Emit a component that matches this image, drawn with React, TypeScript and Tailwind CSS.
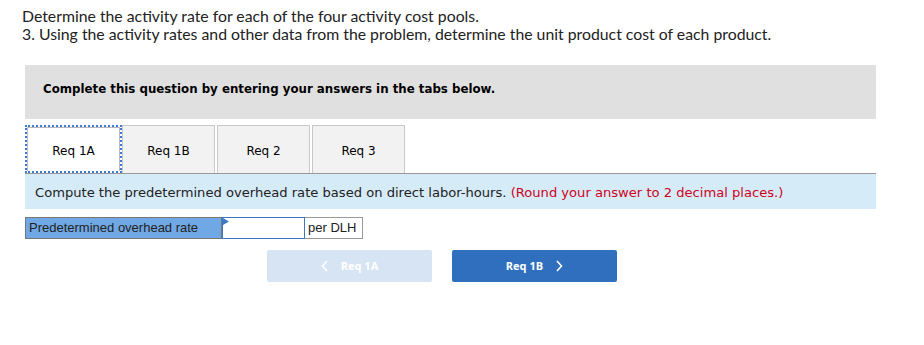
import React from 'react';

const verdana = "font-['Verdana','DejaVu_Sans',sans-serif]";

const tabs = ['Req 1A', 'Req 1B', 'Req 2', 'Req 3'];

const App: React.FC = () => {
  return (
    <div className="w-[924px] h-[345px] bg-white overflow-hidden">
      {/* Question text */}
      <div className="pl-[22px] pt-[7px] text-[15.8px] leading-[18px] text-[#222] font-['Lato','Open_Sans',sans-serif]">
        <p>Determine the activity rate for each of the four activity cost pools.</p>
        <p>3. Using the activity rates and other data from the problem, determine the unit product cost of each product.</p>
      </div>

      <div className="ml-[25px] w-[851px] mt-[22px]">
        {/* Instruction box */}
        <div className={`h-[54px] bg-[#e0e0e0] pl-[18px] pt-[11px] ${verdana}`}>
          <span className="text-[11.8px] font-bold text-black">Complete this question by entering your answers in the tabs below.</span>
        </div>

        {/* Tabs */}
        <div className={`mt-[6px] flex h-[48px] ${verdana}`}>
          {tabs.map((t, i) =>
            i === 0 ? (
              <div key={t} className="w-[97px] border-2 border-dotted border-[#3a7bd5] p-0">
                <div className="h-full bg-white border border-[#bbb] border-b-0 flex items-center justify-center pt-[3px] text-[12px] text-black">
                  {t}
                </div>
              </div>
            ) : (
              <div
                key={t}
                className={`w-[93px] ${i > 1 ? 'ml-[2px]' : ''} bg-[#f2f2f2] border border-[#c8c8c8] border-b-0 flex items-center justify-center pt-[3px] text-[12px] text-black`}
              >
                {t}
              </div>
            )
          )}
        </div>

        {/* Instruction panel */}
        <div className={`h-[36px] bg-[#d6ebf8] border-t border-[#999] flex items-center pl-[10px] pt-[3px] text-[13.1px] text-[#222] ${verdana}`}>
          <span>
            Compute the predetermined overhead rate based on direct labor-hours.{' '}
            <span className="text-[#d0021b]">(Round your answer to 2 decimal places.)</span>
          </span>
        </div>

        {/* Answer row */}
        <div className="mt-[8px] flex h-[22px] font-['Liberation_Sans',Arial,sans-serif] text-[13px]">
          <div className="w-[197px] bg-[#6fa8e4] border border-[#777] flex items-center pl-[3px] text-[#222]">
            Predetermined overhead rate
          </div>
          <div className="relative w-[83px] border border-[#3c78c8] bg-white">
            <svg className="absolute left-0 top-0" width="6" height="7" viewBox="0 0 6 7">
              <path d="M0 0 L6 3.5 L0 7 Z" fill="#3c78c8" />
            </svg>
          </div>
          <div className="w-[58px] border border-[#999] border-l-0 flex items-center pl-[3px] text-[#222]">
            per DLH
          </div>
        </div>

        {/* Navigation buttons */}
        <div className="mt-[11px] ml-[242px] flex gap-[20px] font-['Open_Sans','Liberation_Sans',sans-serif]">
          <div className="w-[165px] h-[32px] rounded-[2px] bg-[#d6e4f3] flex items-center justify-center gap-[12px] text-white text-[11px] font-bold">
            <svg width="8" height="12" viewBox="0 0 8 12">
              <path d="M6 1 L1.5 6 L6 11" stroke="white" strokeWidth="1.6" fill="none" />
            </svg>
            <span>Req 1A</span>
          </div>
          <div className="w-[165px] h-[32px] rounded-[2px] bg-[#2f6fbd] flex items-center justify-center gap-[12px] text-white text-[11px] font-bold">
            <span>Req 1B</span>
            <svg width="8" height="12" viewBox="0 0 8 12">
              <path d="M2 1 L6.5 6 L2 11" stroke="white" strokeWidth="1.6" fill="none" />
            </svg>
          </div>
        </div>
      </div>
    </div>
  );
};

export default App;
